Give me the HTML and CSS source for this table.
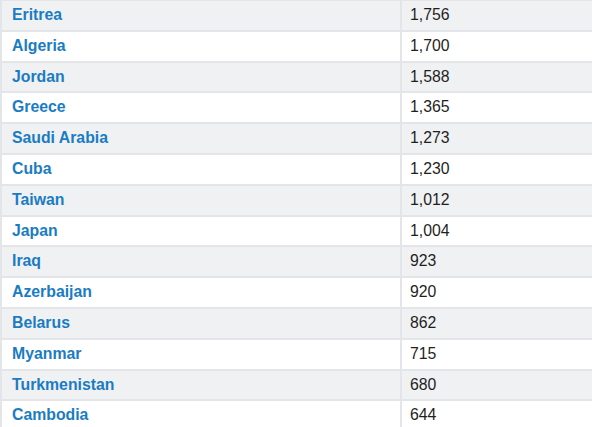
FILE: index.html
```html
<!DOCTYPE html>
<html>
<head>
<meta charset="utf-8">
<link rel="stylesheet" href="styles.css">
</head>
<body>
<table class="stats">
<tbody>
<tr><td class="name">Eritrea</td><td class="num">1,756</td></tr>
<tr><td class="name">Algeria</td><td class="num">1,700</td></tr>
<tr><td class="name">Jordan</td><td class="num">1,588</td></tr>
<tr><td class="name">Greece</td><td class="num">1,365</td></tr>
<tr><td class="name">Saudi Arabia</td><td class="num">1,273</td></tr>
<tr><td class="name">Cuba</td><td class="num">1,230</td></tr>
<tr><td class="name">Taiwan</td><td class="num">1,012</td></tr>
<tr><td class="name">Japan</td><td class="num">1,004</td></tr>
<tr><td class="name">Iraq</td><td class="num">923</td></tr>
<tr><td class="name">Azerbaijan</td><td class="num">920</td></tr>
<tr><td class="name">Belarus</td><td class="num">862</td></tr>
<tr><td class="name">Myanmar</td><td class="num">715</td></tr>
<tr><td class="name">Turkmenistan</td><td class="num">680</td></tr>
<tr><td class="name">Cambodia</td><td class="num">644</td></tr>
</tbody>
</table>
</body>
</html>
```
FILE: styles.css
```css
html, body {
  margin: 0;
  padding: 0;
  background: #ffffff;
}
body {
  font-family: "Liberation Sans", Arial, sans-serif;
  font-size: 15.8px;
  overflow: hidden;
}
.stats {
  width: 594px;
  margin-top: -1px;
  border-collapse: separate;
  border-spacing: 2px;
  background: #e3e5e8;
  table-layout: fixed;
}
.stats td {
  padding: 5px 8px 5px 8px;
  line-height: 18.8px;
  height: 18.8px;
  white-space: nowrap;
}
.stats tr:nth-child(odd) td {
  background: #f0f1f3;
}
.stats tr:nth-child(even) td {
  background: #ffffff;
}
.name {
  width: 380px;
  font-weight: bold;
  color: #1a7cc2;
  padding-left: 10px !important;
}
.num {
  color: #1f1f1f;
}
```
